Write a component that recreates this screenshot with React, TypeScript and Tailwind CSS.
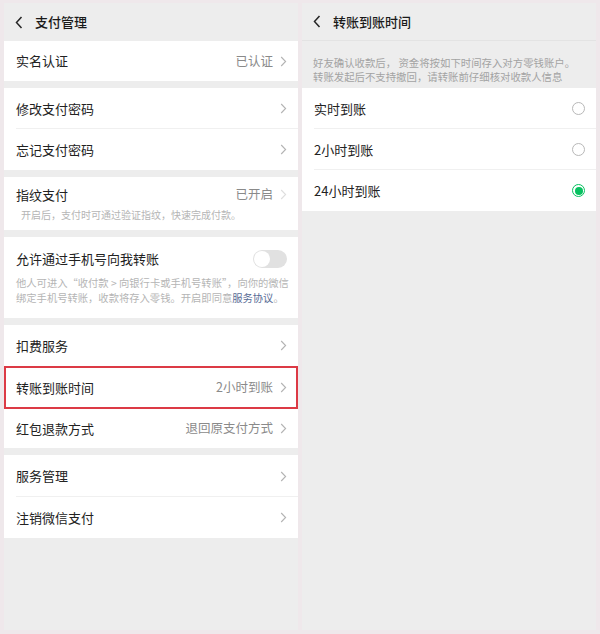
import React from "react";

const font = { fontFamily: '"Noto Sans CJK SC", "Noto Sans", sans-serif' };

function Chevron() {
  return (
    <svg width="7" height="11" viewBox="0 0 7 11" className="shrink-0">
      <path d="M1.2 1 L5.6 5.5 L1.2 10" fill="none" stroke="#b3b3b3" strokeWidth="1.1" />
    </svg>
  );
}

function Back() {
  return (
    <svg width="8" height="13" viewBox="0 0 8 13" className="shrink-0">
      <path d="M6.5 1 L1.5 6.5 L6.5 12" fill="none" stroke="#262626" strokeWidth="1.5" />
    </svg>
  );
}

function Row({ label, value, divider, h = "h-[41px]" }: { label: string; value?: string; divider?: boolean; h?: string }) {
  return (
    <div className={`relative flex items-center justify-between pl-[12px] pr-[11px] ${h}`}>
      <span className="text-[13px] text-[#222]">{label}</span>
      <div className="flex items-center gap-[7px]">
        {value && <span className="text-[12.5px] text-[#8a8a8a]">{value}</span>}
        <Chevron />
      </div>
      {divider && <div className="absolute bottom-0 left-[12px] right-0 h-px bg-[#f0f0f0]" />}
    </div>
  );
}

function Radio({ on }: { on?: boolean }) {
  if (on)
    return (
      <div className="w-[13px] h-[13px] rounded-full border border-[#07c160] flex items-center justify-center">
        <div className="w-[8px] h-[8px] rounded-full bg-[#07c160]" />
      </div>
    );
  return <div className="w-[13px] h-[13px] rounded-full border border-[#b8b8b8]" />;
}

export default function App() {
  return (
    <div className="w-[600px] h-[634px] bg-[#efe8eb] flex gap-[4px] px-[4px] pt-[3px] pb-[4px]" style={font}>
      {/* Left panel */}
      <div className="w-[294px] h-full bg-[#ededed] flex flex-col">
        <div className="h-[38px] flex items-center pl-[11px] gap-[12px]">
          <Back />
          <span className="text-[13px] font-medium text-[#1a1a1a]">支付管理</span>
        </div>
        <div className="bg-white">
          <Row label="实名认证" value="已认证" h="h-[40px]" />
        </div>
        <div className="bg-white mt-[7px]">
          <Row label="修改支付密码" divider />
          <Row label="忘记支付密码" />
        </div>
        <div className="bg-white mt-[7px] h-[53px] pl-[12px] pr-[11px] pt-[8px]">
          <div className="flex items-center justify-between">
            <span className="text-[13px] text-[#222]">指纹支付</span>
            <div className="flex items-center gap-[7px]">
              <span className="text-[12.5px] text-[#8a8a8a]">已开启</span>
              <svg width="7" height="11" viewBox="0 0 7 11"><path d="M1.2 1 L5.6 5.5 L1.2 10" fill="none" stroke="#dedede" strokeWidth="1.1" /></svg>
            </div>
          </div>
          <div className="text-[10px] text-[#b5b5b5] mt-[3px] pl-[5px] leading-[14px]">开启后，支付时可通过验证指纹，快速完成付款。</div>
        </div>
        <div className="bg-white mt-[7px] h-[81px] pl-[12px] pr-[8px] pt-[12px]">
          <div className="flex items-center justify-between pr-[3px]">
            <span className="text-[13px] text-[#222]">允许通过手机号向我转账</span>
            <div className="w-[34px] h-[18px] rounded-full bg-[#e1e1e1] flex items-center px-[1px]">
              <div className="w-[16px] h-[16px] rounded-full bg-white" />
            </div>
          </div>
          <div className="text-[10.3px] text-[#b5b5b5] mt-[6px] leading-[15px] whitespace-nowrap">
            <div>他人可进入“收付款 &gt; 向银行卡或手机号转账”，向你的微信</div>
            <div>绑定手机号转账，收款将存入零钱。开启即同意<span className="text-[#576b95]">服务协议</span>。</div>
          </div>
        </div>
        <div className="bg-white mt-[7px]">
          <Row label="扣费服务" />
          <div className="border-2 border-[#dc3a45] h-[43px] flex items-center justify-between pl-[10px] pr-[9px]">
            <span className="text-[13px] text-[#222]">转账到账时间</span>
            <div className="flex items-center gap-[7px]">
              <span className="text-[12.5px] text-[#8a8a8a]">2小时到账</span>
              <Chevron />
            </div>
          </div>
          <Row label="红包退款方式" value="退回原支付方式" h="h-[39px]" />
        </div>
        <div className="bg-white mt-[7px]">
          <Row label="服务管理" divider h="h-[42px]" />
          <Row label="注销微信支付" />
        </div>
      </div>

      {/* Right panel */}
      <div className="w-[294px] h-full bg-[#ededed] flex flex-col">
        <div className="h-[38px] flex items-center pl-[11px] gap-[12px] border-b border-[#e3e3e3]">
          <Back />
          <span className="text-[13px] font-medium text-[#1a1a1a]">转账到账时间</span>
        </div>
        <div className="h-[47px] pl-[11px] pt-[15px] text-[10.4px] leading-[14px] text-[#a3a3a3] whitespace-nowrap">
          <div>好友确认收款后， 资金将按如下时间存入对方零钱账户。</div>
          <div>转账发起后不支持撤回，请转账前仔细核对收款人信息</div>
        </div>
        <div className="bg-white">
          {[
            { t: "实时到账", on: false },
            { t: "2小时到账", on: false },
            { t: "24小时到账", on: true },
          ].map((r, i) => (
            <div key={r.t} className="relative h-[41px] flex items-center justify-between pl-[12px] pr-[11px]">
              <span className="text-[13px] text-[#222]">{r.t}</span>
              <Radio on={r.on} />
              {i < 2 && <div className="absolute bottom-0 left-[12px] right-0 h-px bg-[#f0f0f0]" />}
            </div>
          ))}
        </div>
      </div>
    </div>
  );
}
